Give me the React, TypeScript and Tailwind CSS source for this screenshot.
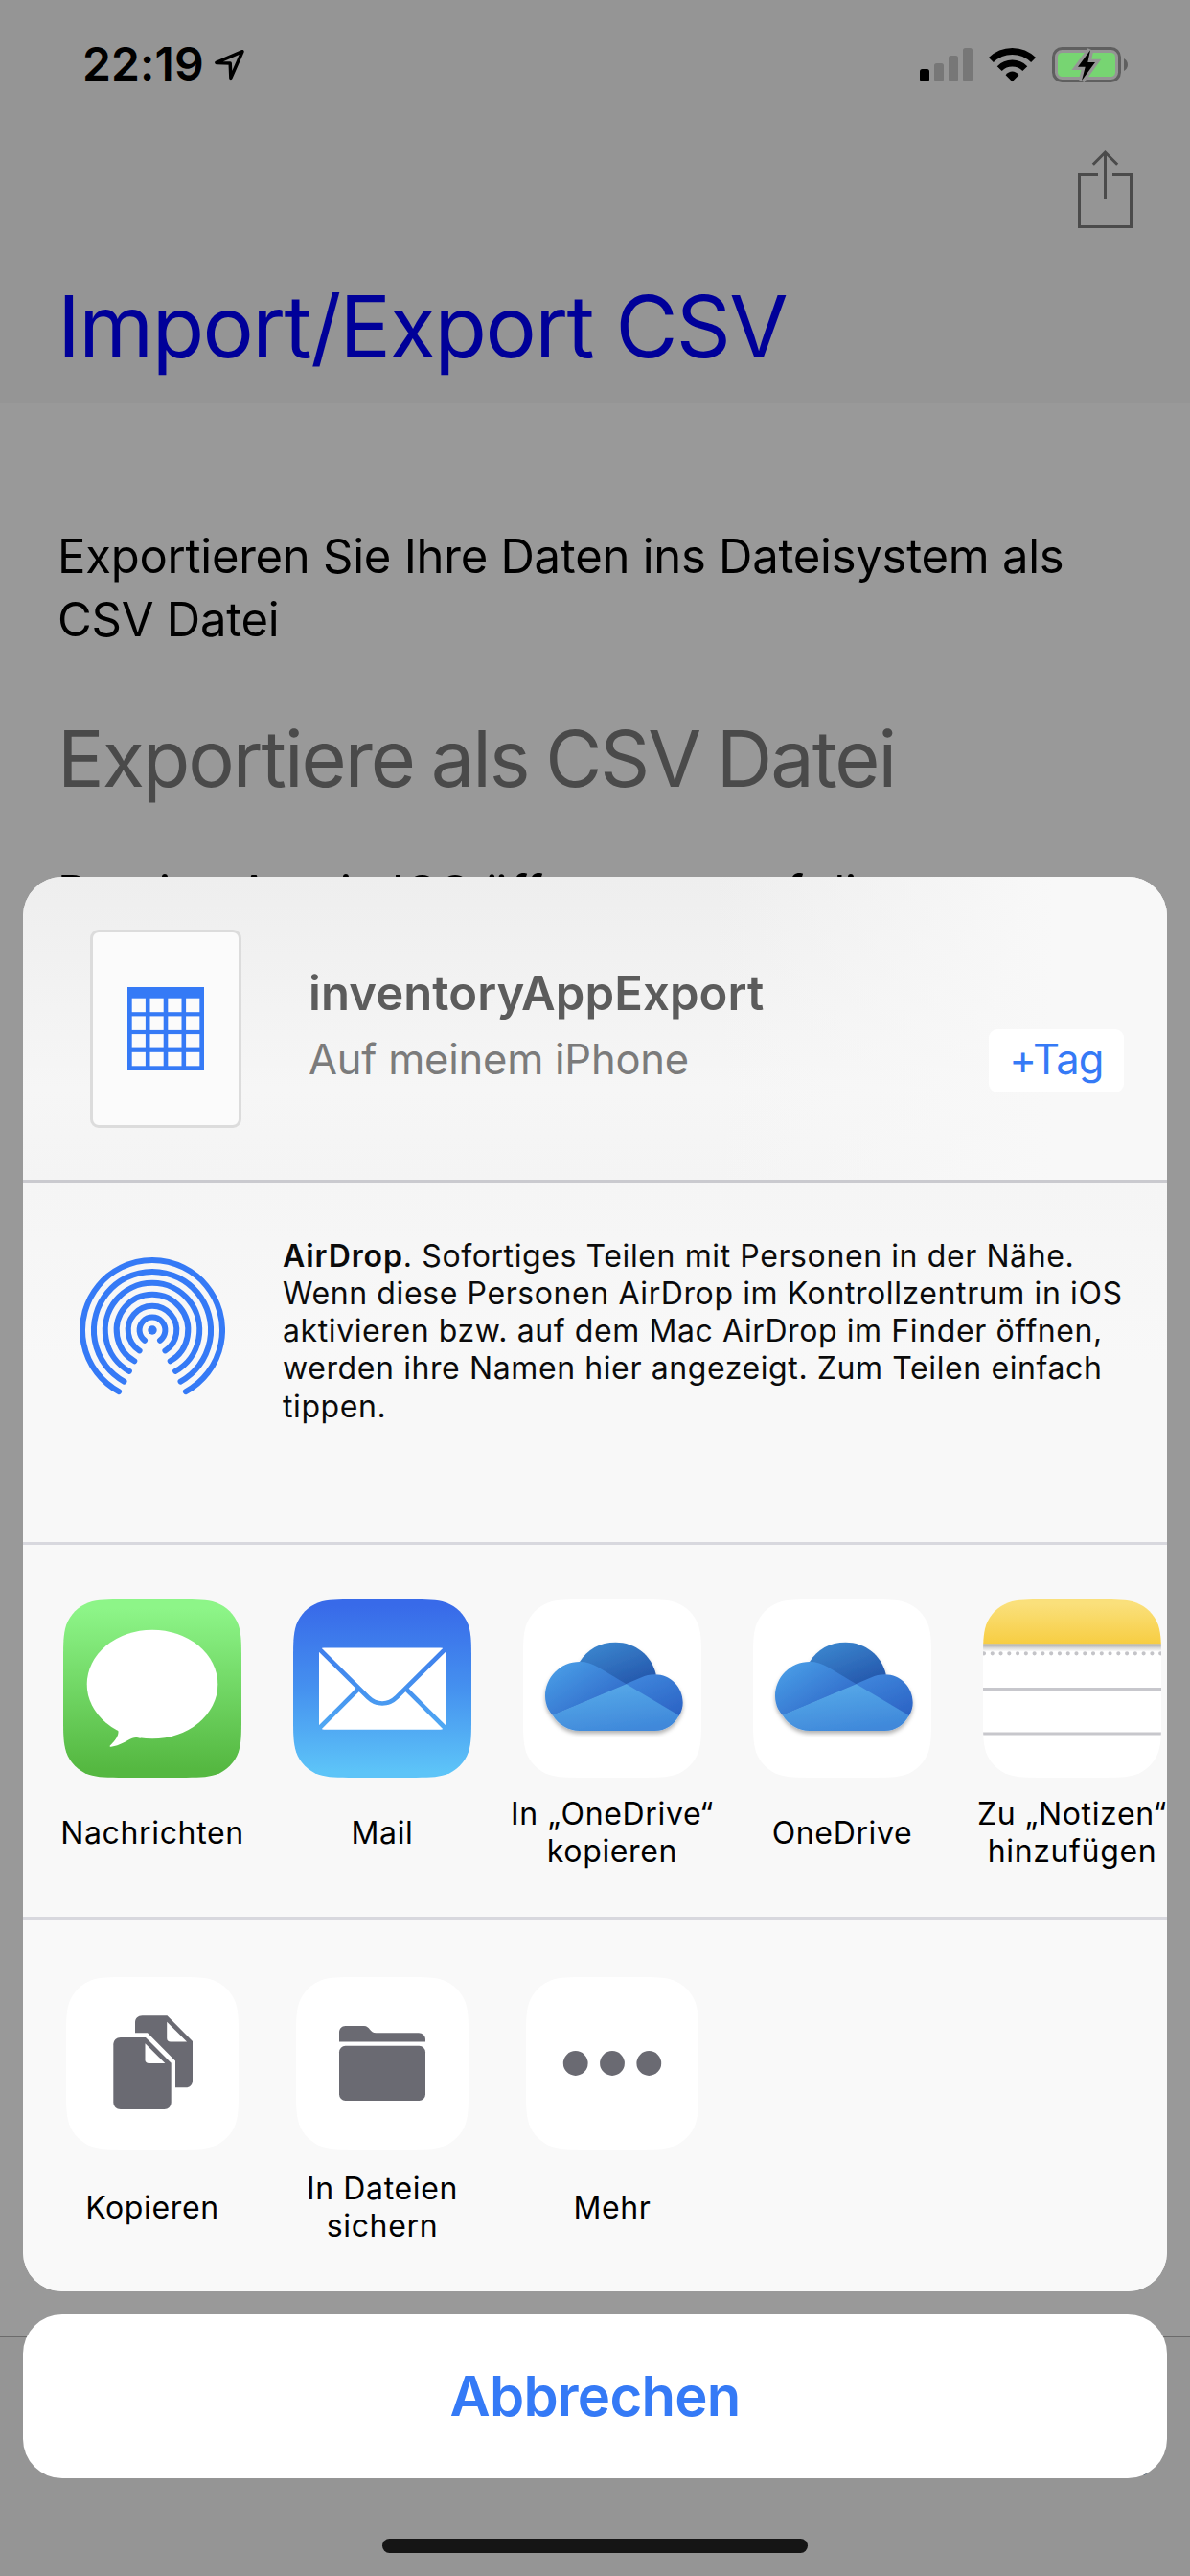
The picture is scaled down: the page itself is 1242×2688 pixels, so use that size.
import React from "react";
import type { ReactNode } from "react";

// Continuous-curvature rounded square, built corner by corner.
function squircle(s: number, r: number) {
  const a = 1.528 * r;
  const b = 1.088 * r;
  const c = 0.868 * r;
  const d = 0.631 * r;
  const e = 0.075 * r;
  const f = 0.373 * r;
  const g = 0.169 * r;
  return [
    `M${a} 0H${s - a}`,
    `C${s - b} 0 ${s - c} 0 ${s - d} ${e}C${s - f} ${g} ${s - g} ${f} ${s - e} ${d}C${s} ${c} ${s} ${b} ${s} ${a}`,
    `V${s - a}`,
    `C${s} ${s - b} ${s} ${s - c} ${s - e} ${s - d}C${s - g} ${s - f} ${s - f} ${s - g} ${s - d} ${s - e}C${s - c} ${s} ${s - b} ${s} ${s - a} ${s}`,
    `H${a}`,
    `C${b} ${s} ${c} ${s} ${d} ${s - e}C${f} ${s - g} ${g} ${s - f} ${e} ${s - d}C0 ${s - c} 0 ${s - b} 0 ${s - a}`,
    `V${a}`,
    `C0 ${b} 0 ${c} ${e} ${d}C${g} ${f} ${f} ${g} ${d} ${e}C${c} 0 ${b} 0 ${a} 0Z`,
  ].join("");
}

const SQUIRCLE_186 = squircle(186, 42);
const SQUIRCLE_180 = squircle(180, 42);

function StatusIcons() {
  return (
    <svg className="h-[40px] w-[220px]" viewBox="960 48 220 40" fill="none">
      <rect x="960" y="72" width="10" height="13" rx="2.5" fill="#000" />
      <rect x="975" y="66" width="10" height="19" rx="2.5" fill="#777" />
      <rect x="990" y="58" width="10" height="27" rx="2.5" fill="#777" />
      <rect x="1005" y="50" width="10" height="35" rx="2.5" fill="#777" />
      <path d="M1056.5 85.2L1049.6 78.2C1053.5 73.2 1059.5 73.2 1063.4 78.2Z" fill="#000" />
      <path d="M1043.2 71.6A18.8 18.8 0 0 1 1069.8 71.6" stroke="#000" strokeWidth="7" />
      <path d="M1034.4 62.6A31.3 31.3 0 0 1 1078.6 62.6" stroke="#000" strokeWidth="7" />
      <rect x="1099.5" y="50.5" width="69" height="34" rx="9" stroke="#5f5f5f" strokeWidth="3" />
      <rect x="1104" y="55" width="60" height="25" rx="4.5" fill="#77d572" />
      <path d="M1173 61C1178.3 63.5 1178.3 71.5 1173 74Z" fill="#5f5f5f" />
      <path
        d="M1138 52.3L1125 69.7H1132.7L1129 84L1143 65H1135.3L1138 52.3Z"
        fill="#000"
        stroke="#959595"
        strokeWidth="6.5"
      />
      <path d="M1138 52.3L1125 69.7H1132.7L1129 84L1143 65H1135.3L1138 52.3Z" fill="#000" />
    </svg>
  );
}

function LocationArrow() {
  return (
    <svg className="h-[36px] w-[36px]" viewBox="222 50 36 36" fill="none">
      <path d="M253 53.7L225.8 65.4L240.2 66L240.9 81.4Z" stroke="#000" strokeWidth="3.5" strokeLinejoin="round" />
    </svg>
  );
}

function ShareIcon() {
  return (
    <svg className="h-[84px] w-[60px]" viewBox="1124 155 60 84" fill="none" stroke="#4b4b4b" strokeWidth="3">
      <path d="M1146 182.5H1126.5V236.5H1180.5V182.5H1161" />
      <path d="M1153.5 208V159.5" />
      <path d="M1140.8 171.7L1153.5 159L1166.2 171.7" />
    </svg>
  );
}

function SheetFileIcon() {
  const steps = [0, 1, 2, 3];
  return (
    <svg className="h-[87px] w-[80px]" viewBox="0 0 80 87">
      <rect width="80" height="87" fill="#357af6" />
      {steps.map((r) =>
        steps.map((c) => (
          <rect key={`${r}-${c}`} x={4.7 + c * 18.8} y={11.7 + r * 18.7} width="14.2" height="14.5" fill="#fbfbfb" />
        )),
      )}
    </svg>
  );
}

const AIRDROP_ARCS = [
  { r: 13.4, dx: 8 },
  { r: 25.3, dx: 13.4 },
  { r: 37.3, dx: 18.7 },
  { r: 49.2, dx: 24.1 },
  { r: 61.1, dx: 29.5 },
  { r: 73, dx: 34.9 },
];

function AirDropIcon() {
  return (
    <svg className="h-[152px] w-[152px]" viewBox="-76 -76 152 152" fill="none">
      <circle r="4.7" fill="#357af6" />
      {AIRDROP_ARCS.map(({ r, dx }) => {
        const dy = Math.sqrt(r * r - dx * dx);
        return (
          <path
            key={r}
            d={`M${-dx} ${dy}A${r} ${r} 0 1 1 ${dx} ${dy}`}
            stroke="#357af6"
            strokeWidth="6"
            strokeLinecap="round"
          />
        );
      })}
    </svg>
  );
}

function MessagesIcon() {
  return (
    <svg className="size-[186px]" viewBox="0 0 186 186">
      <defs>
        <linearGradient id="messages" x1="0" y1="0" x2="0" y2="1">
          <stop offset="0.05" stopColor="#8df588" />
          <stop offset="0.95" stopColor="#55b841" />
        </linearGradient>
      </defs>
      <path d={SQUIRCLE_186} fill="url(#messages)" />
      <ellipse cx="93" cy="88.5" rx="68.3" ry="56.8" fill="#fff" />
      <path
        d="M52 131C56 134 58 135.3 57.5 139C57 144 52 149.5 48.8 152.5C48.2 153.5 49 153.8 50 153.7C59 152.5 66 147.5 72 144.8C75 143.5 77 144 81 144.6L90 120Z"
        fill="#fff"
      />
    </svg>
  );
}

function MailIcon() {
  return (
    <svg className="size-[186px]" viewBox="0 0 186 186" fill="none">
      <defs>
        <linearGradient id="mail" gradientUnits="userSpaceOnUse" x1="0" y1="0" x2="0" y2="186">
          <stop offset="0.03" stopColor="#386ae9" />
          <stop offset="0.5" stopColor="#4591ef" />
          <stop offset="0.97" stopColor="#5dc4f8" />
        </linearGradient>
      </defs>
      <path d={SQUIRCLE_186} fill="url(#mail)" />
      <rect x="27" y="50.5" width="132" height="85.3" rx="5" fill="#fff" />
      <g stroke="url(#mail)" strokeWidth="4.6">
        <path d="M26 50.5L78 102C87 110.7 99 110.7 108 102L160 50.5" />
        <path d="M68.5 93L26 135.5" />
        <path d="M117.5 93L160 135.5" />
      </g>
    </svg>
  );
}

function OneDriveIcon({ id }: { id: string }) {
  return (
    <svg className="size-[186px]" viewBox="0 0 186 186">
      <defs>
        <linearGradient id={`${id}-back`} x1="0.1" y1="0" x2="0.8" y2="1">
          <stop offset="0.1" stopColor="#3a84cd" />
          <stop offset="0.9" stopColor="#265aae" />
        </linearGradient>
        <linearGradient id={`${id}-left`} x1="0.1" y1="0.2" x2="0.8" y2="0.9">
          <stop offset="0" stopColor="#4799e4" />
          <stop offset="0.85" stopColor="#336fcc" />
        </linearGradient>
        <linearGradient id={`${id}-right`} x1="0.2" y1="0" x2="0.8" y2="1">
          <stop offset="0" stopColor="#3f86dc" />
          <stop offset="1" stopColor="#2c64c5" />
        </linearGradient>
        <linearGradient id={`${id}-front`} x1="0.2" y1="0" x2="0.6" y2="1">
          <stop offset="0" stopColor="#58abe9" />
          <stop offset="1" stopColor="#3f88da" />
        </linearGradient>
        <filter id={`${id}-shadow`} x="-20%" y="-20%" width="140%" height="150%">
          <feDropShadow dx="0" dy="3" stdDeviation="2" floodColor="#000" floodOpacity="0.3" />
        </filter>
      </defs>
      <path d={SQUIRCLE_186} fill="#fff" />
      <g filter={`url(#${id}-shadow)`}>
        <path d="M59 65C67 52 80 44.7 96.5 44.7C117 44.7 134 58 138.8 78.5L108 90L70 80Z" fill={`url(#${id}-back)`} />
        <path
          d="M59 65C66 65 72 67 78 70.6L108.5 88.8L31 121C25.5 115 23 108 23 101C23 81 39 65 59 65Z"
          fill={`url(#${id}-left)`}
        />
        <path
          d="M107 88.3L123 81.6C128 79.3 132 78.3 137.5 78.3C154 78.3 166.7 91.5 166.7 107.7C166.7 112.5 165.3 117 162.7 121.5L140 118Z"
          fill={`url(#${id}-right)`}
        />
        <path
          d="M107.7 88.3L162.7 121C157.5 131 148.5 137 137.5 137H59C47 137 37 130.5 30.7 120.8Z"
          fill={`url(#${id}-front)`}
        />
      </g>
    </svg>
  );
}

function NotesIcon() {
  return (
    <svg className="size-[186px]" viewBox="0 0 186 186">
      <defs>
        <linearGradient id="notes" x1="0" y1="0" x2="0" y2="1">
          <stop offset="0.1" stopColor="#fae07b" />
          <stop offset="1" stopColor="#f7cd42" />
        </linearGradient>
        <linearGradient id="notes-shadow" x1="0" y1="0" x2="0" y2="1">
          <stop offset="0" stopColor="#a0a0a0" />
          <stop offset="0.5" stopColor="#dadada" />
          <stop offset="1" stopColor="#fff" />
        </linearGradient>
        <clipPath id="notes-clip">
          <path d={SQUIRCLE_186} />
        </clipPath>
      </defs>
      <g clipPath="url(#notes-clip)">
        <rect width="186" height="186" fill="#fff" />
        <rect width="186" height="46.5" fill="url(#notes)" />
        <rect y="46.5" width="186" height="8" fill="url(#notes-shadow)" />
        <path d="M1 56.3H186" stroke="#c4c4c8" strokeWidth="4.2" strokeLinecap="round" strokeDasharray="0 8.77" />
        <path d="M0 93.5H186M0 140H186" stroke="#c7c7cc" strokeWidth="3" />
      </g>
    </svg>
  );
}

function ActionTile({ children }: { children: ReactNode }) {
  return (
    <svg className="size-[180px]" viewBox="0 0 180 180">
      <path d={SQUIRCLE_180} fill="#fff" />
      <g fill="#6a6a72">{children}</g>
    </svg>
  );
}

function CopyGlyph() {
  return (
    <>
      <path d="M79.5 40.3H105.5L132 67V108C132 112.5 129 115.3 125 115.3H114V87.5L85 58.3H72V47.5C72 43.3 75 40.3 79.5 40.3Z" />
      <path d="M105.2 46.7L126 67.5H109C106.5 67.5 105.2 66 105.2 64Z" fill="#fff" />
      <path d="M56.8 63H83L109.7 89.7V130.5C109.7 135 106.5 138 102.5 138H56.8C52.5 138 49.3 135 49.3 130.5V70.5C49.3 66 52.5 63 56.8 63Z" />
      <path d="M82.5 69.3L103.3 90H86.5C84 90 82.5 88.7 82.5 86.5Z" fill="#fff" />
    </>
  );
}

function FolderGlyph() {
  return (
    <>
      <path d="M51.5 51H71C77 51 77 58.3 83.5 58.3H128C132 58.3 135 61.3 135 65V67.5H45V58C45 54 47.5 51 51.5 51Z" />
      <rect x="45" y="71.8" width="90" height="57.2" rx="6.5" />
    </>
  );
}

function MoreGlyph() {
  return (
    <>
      <circle cx="51.7" cy="90" r="12.9" />
      <circle cx="90" cy="90" r="12.9" />
      <circle cx="128.3" cy="90" r="12.9" />
    </>
  );
}

function ShareItem({ icon, lines, action = false }: { icon: ReactNode; lines: string[]; action?: boolean }) {
  return (
    <button type="button" className={`flex w-[240px] shrink-0 flex-col items-center ${action ? "gap-[21px]" : "gap-[18px]"}`}>
      {icon}
      <span className="flex h-[78px] flex-col justify-center whitespace-nowrap text-center text-[32px] leading-[39px] tracking-[0.65px] text-black">
        {lines.map((line) => (
          <span key={line}>{line}</span>
        ))}
      </span>
    </button>
  );
}

export default function App() {
  return (
    <div className="relative flex h-[2688px] w-[1242px] flex-col overflow-hidden bg-[#999999] font-['Inter',sans-serif] text-black">
      <header className="flex h-[421px] flex-col border-b border-[#6b6b6b] bg-[#959595]">
        <div className="flex h-[100px] items-start pl-[86px] pr-[62px] pt-[43px]">
          <span className="w-[136px] text-[48px] font-semibold leading-[48px] tracking-[0.15px]">22:19</span>
          <span className="mt-[7px]">
            <LocationArrow />
          </span>
          <span className="ml-auto mt-[5px]">
            <StatusIcons />
          </span>
        </div>
        <div className="flex justify-end pr-[58px] pt-[55px]">
          <ShareIcon />
        </div>
        <h1 className="mt-[52px] pl-[60px] text-[89px] leading-[100px] tracking-[-1.6px] text-[#000099]">
          Import/Export CSV
        </h1>
      </header>

      <main className="flex-1 px-[60px] pt-[127px]">
        <p className="whitespace-nowrap text-[49px] leading-[66px] tracking-[-0.26px]">
          Exportieren Sie Ihre Daten ins Dateisystem als
          <br />
          CSV Datei
        </p>
        <p className="mt-[62px] whitespace-nowrap text-[81px] leading-[100px] tracking-[-2.05px] text-[#4a4a4a] [word-spacing:-3px]">
          Exportiere als CSV Datei
        </p>
        <p className="mt-[57px] whitespace-nowrap text-[49px] leading-[66px] tracking-[-0.24px]">
          Dateien App in IOS öffnen, um auf die
        </p>
      </main>

      <footer className="flex h-[250px] items-start justify-end border-t border-[#6b6b6b] bg-[#959595] pr-[30px] pt-[93px]">
        <span className="text-[48px] leading-[48px] text-[#4a4a4a]">y</span>
      </footer>

      <div className="absolute inset-x-[24px] bottom-0 flex h-[1773px] flex-col">
        <section className="flex h-[1476px] flex-col overflow-hidden rounded-[41px] bg-[#f8f8f8]">
          <div className="flex h-[319px] items-start border-b-[3px] border-[#cacacf] bg-[linear-gradient(to_right,transparent_60%,#f8f8f8_90%),linear-gradient(to_bottom,#eeeeee,#f6f6f6_70%,#f4f4f4)]">
            <div className="ml-[70px] mt-[55px] flex h-[207px] w-[158px] items-center justify-center rounded-[9px] border-[3px] border-[#dcdcdc] bg-[#fbfbfb]">
              <SheetFileIcon />
            </div>
            <div className="ml-[70px] mt-[92px] flex flex-col gap-[8px]">
              <span className="text-[49px] font-semibold leading-[60px] tracking-[0.1px] text-[#5c5c5c]">inventoryAppExport</span>
              <span className="text-[43.5px] leading-[60px] tracking-[-0.22px] text-[#7b7b7b]">Auf meinem iPhone</span>
            </div>
            <button
              type="button"
              className="ml-auto mr-[45px] mt-[159px] h-[66px] w-[141px] rounded-[9px] bg-white pb-[4px] text-[43.5px] leading-[62px] tracking-[-0.73px] text-[#357af6]"
            >
              +Tag
            </button>
          </div>

          <div className="flex h-[378px] items-start border-b-[3px] border-[#d8d8de] bg-[linear-gradient(to_bottom,#f5f5f5,#f8f8f8_50%)]">
            <span className="ml-[59px] mt-[78px]">
              <AirDropIcon />
            </span>
            <p className="ml-[60px] mt-[57px] whitespace-nowrap text-[32px] leading-[39.15px] tracking-[0.6px] text-[#0b0b0b]">
              <strong className="font-semibold tracking-[0.9px]">AirDrop</strong>. Sofortiges Teilen mit Personen in der Nähe.
              <br />
              Wenn diese Personen AirDrop im Kontrollzentrum in iOS
              <br />
              aktivieren bzw. auf dem Mac AirDrop im Finder öffnen,
              <br />
              werden ihre Namen hier angezeigt. Zum Teilen einfach
              <br />
              tippen.
            </p>
          </div>

          <div className="flex h-[391px] items-start overflow-hidden border-b-[3px] border-[#d8d8de] pl-[15px] pt-[57px]">
            <ShareItem icon={<MessagesIcon />} lines={["Nachrichten"]} />
            <ShareItem icon={<MailIcon />} lines={["Mail"]} />
            <ShareItem icon={<OneDriveIcon id="onedrive-copy" />} lines={["In „OneDrive“", "kopieren"]} />
            <ShareItem icon={<OneDriveIcon id="onedrive" />} lines={["OneDrive"]} />
            <ShareItem icon={<NotesIcon />} lines={["Zu „Notizen“", "hinzufügen"]} />
          </div>

          <div className="flex flex-1 items-start bg-[#f9f9f9] pl-[15px] pt-[60px]">
            <ShareItem action icon={<ActionTile><CopyGlyph /></ActionTile>} lines={["Kopieren"]} />
            <ShareItem action icon={<ActionTile><FolderGlyph /></ActionTile>} lines={["In Dateien", "sichern"]} />
            <ShareItem action icon={<ActionTile><MoreGlyph /></ActionTile>} lines={["Mehr"]} />
          </div>
        </section>

        <button
          type="button"
          className="mt-[24px] h-[171px] rounded-[41px] bg-white text-[58px] font-semibold tracking-[-0.74px] text-[#357af6]"
        >
          Abbrechen
        </button>
        <div className="mx-auto mt-[63px] h-[15px] w-[444px] rounded-full bg-[#151515]" />
      </div>
    </div>
  );
}
